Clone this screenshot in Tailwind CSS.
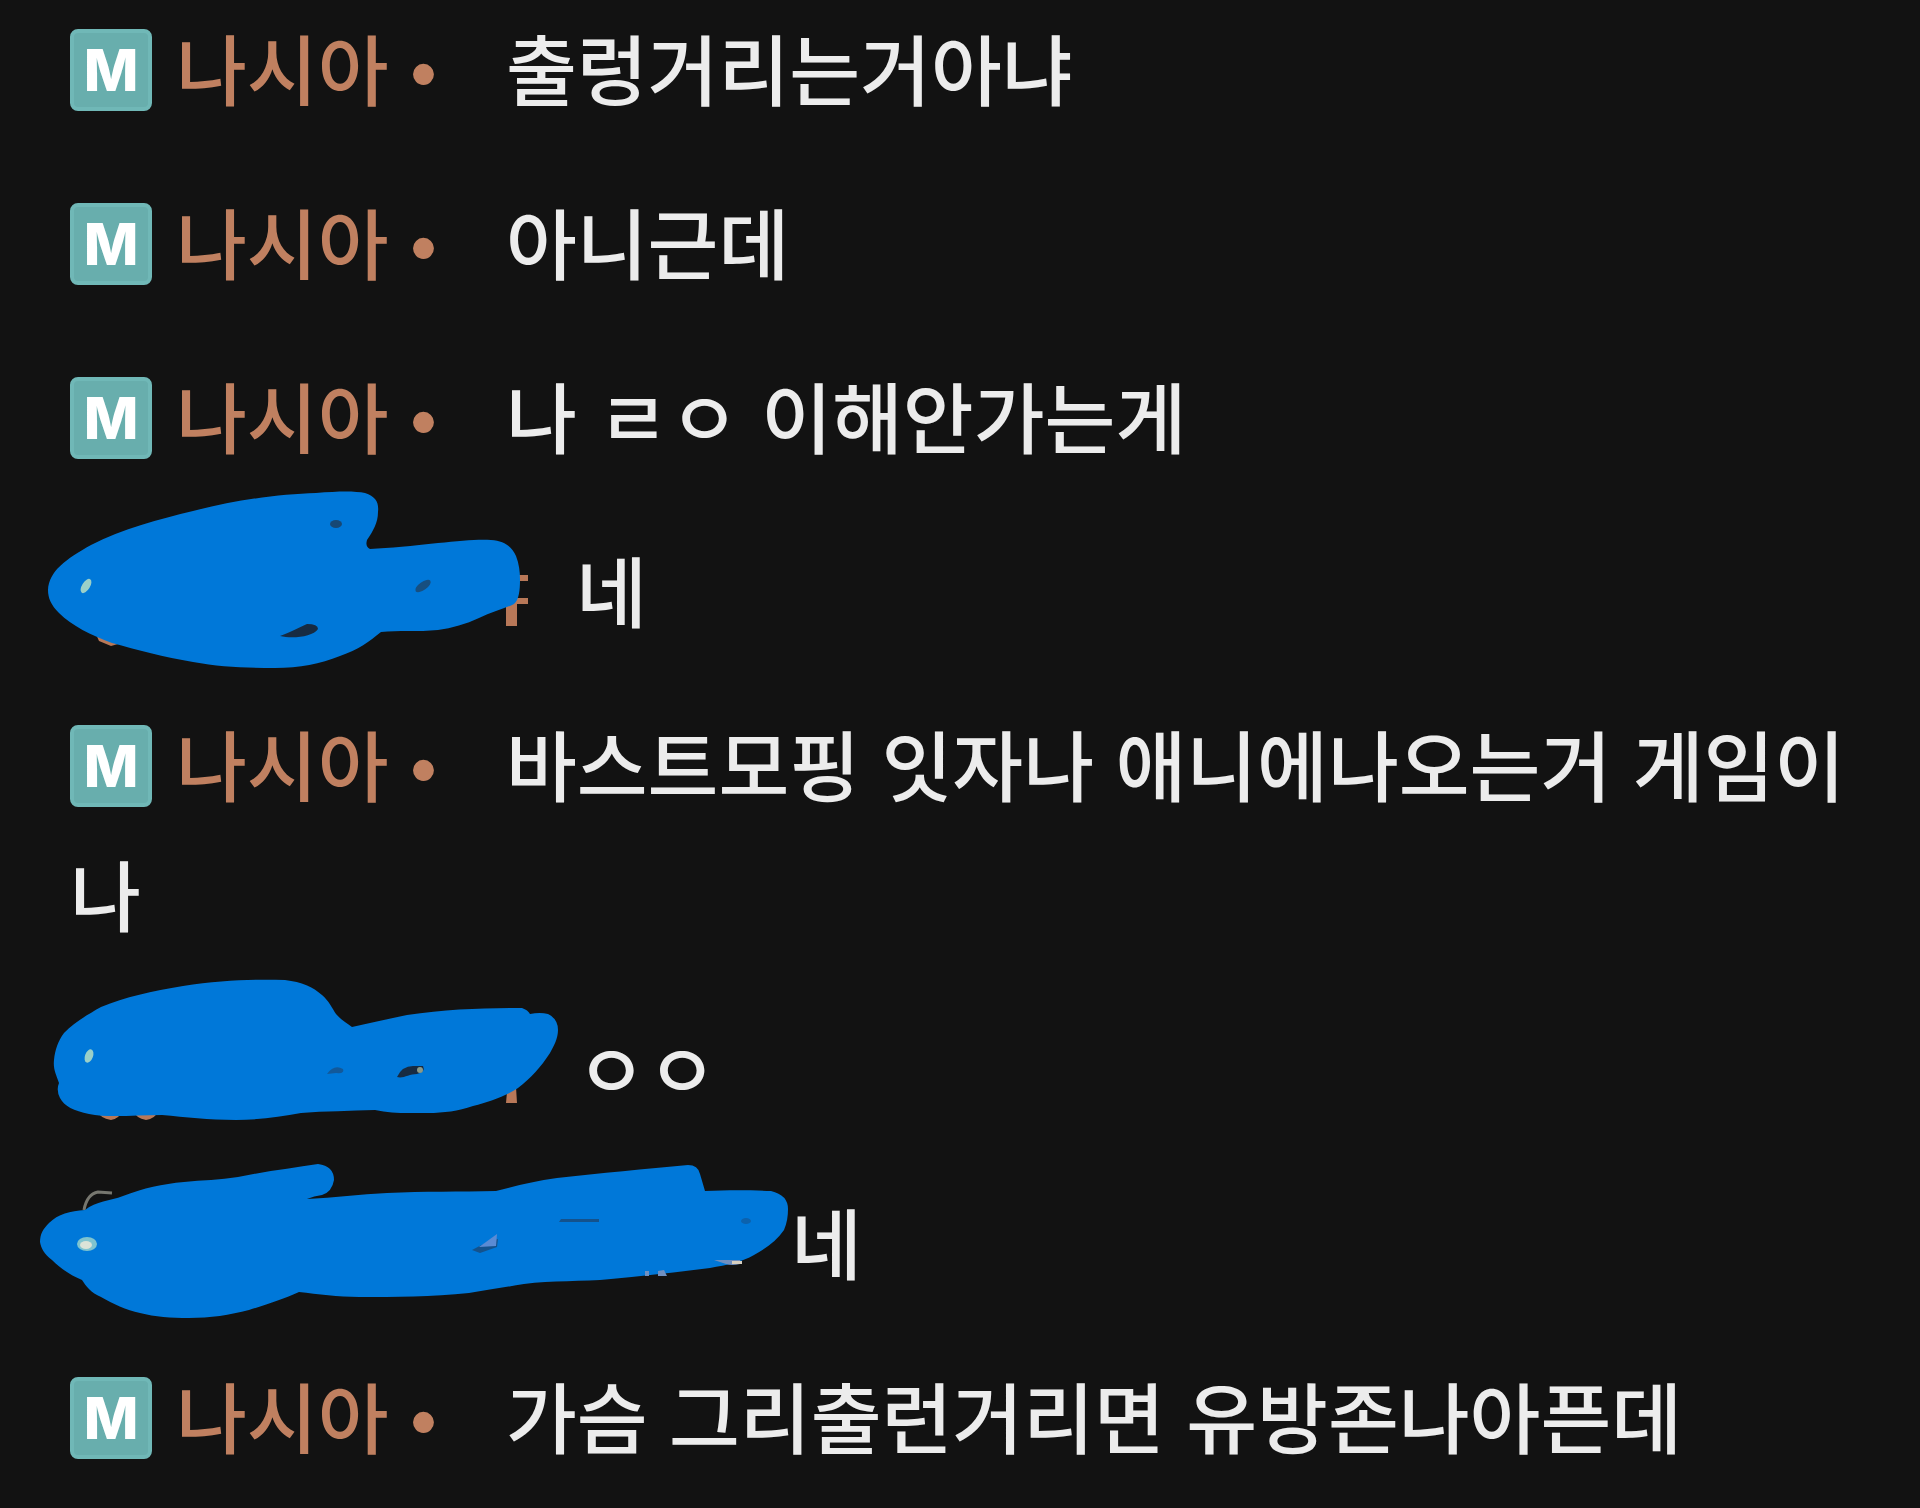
<!DOCTYPE html>
<html lang="ko">
    <head>
        <meta charset="UTF-8">
        <title>Chat</title>

        <meta name="viewport" content="width=device-width, initial-scale=1.0">
        <script src="https://cdn.jsdelivr.net/npm/@tailwindcss/browser@4"></script>
    </head>
    <body class="min-h-screen bg-[#121212]">
        <!-- Latin font first: it supplies the word space, Hangul comes from the CJK font -->
        <ul class="flex flex-col gap-11 overflow-hidden px-[70px] pt-2 font-['Liberation_Sans','Noto_Sans_CJK_KR',sans-serif] text-[77px] leading-[130px] font-medium text-[#ececec]">
            <li>
                <span class="mr-6 mb-5 inline-flex size-[82px] items-center justify-center rounded-lg border-4 border-[#70b8b7] bg-[#68aead] align-middle font-['Inter',sans-serif] text-[58px] leading-none font-extrabold text-white">M</span><span class="mr-[69px] text-[#c08060]">나시아 •</span>출렁거리는거아냐
            </li>
            <li>
                <span class="mr-6 mb-5 inline-flex size-[82px] items-center justify-center rounded-lg border-4 border-[#70b8b7] bg-[#68aead] align-middle font-['Inter',sans-serif] text-[58px] leading-none font-extrabold text-white">M</span><span class="mr-[69px] text-[#c08060]">나시아 •</span>아니근데
            </li>
            <li>
                <span class="mr-6 mb-5 inline-flex size-[82px] items-center justify-center rounded-lg border-4 border-[#70b8b7] bg-[#68aead] align-middle font-['Inter',sans-serif] text-[58px] leading-none font-extrabold text-white">M</span><span class="mr-[69px] text-[#c08060]">나시아 •</span>나 ㄹㅇ 이해안가는게
            </li>
            <!-- Name painted over -->
            <li class="relative pl-[506px]">
                <svg class="absolute -top-[45px] -left-[30px] h-[190px] w-[500px]" viewBox="40 485 500 190" aria-hidden="true">
                    <path fill="#b87858" d="M516 575h12v6h-12zM506 598h22v6h-11v22h-11zM95 632l14 1 9 11-7 2-12-5z" />
                    <path fill="#0078d9" d="M48 590C49 571 66 559 91 545C122 529 160 519 193 511C235 500 280 494 316 493C340 491 355 491 365 493C376 497 379 502 378 512C378 523 373 531 367 540Q365 547 370 549C390 548 412 546 438 543C460 541 478 539 491 540C505 541 512 547 516 556C519 564 520 571 520 580C520 590 519 600 514 604C504 609 492 612 479 618C466 624 452 628 438 630C418 632 398 630 381 632C370 641 358 650 340 656C320 664 300 668 275 668C245 668 220 667 193 662C164 657 137 650 112 643C91 635 72 626 59 613C51 605 48 598 48 590Z" />
                    <ellipse cx="86" cy="586" rx="4" ry="8" transform="rotate(32 86 586)" fill="#9bd0c8" />
                    <ellipse cx="336" cy="524" rx="6" ry="4" fill="#174874" />
                    <ellipse cx="423" cy="586" rx="9" ry="4" transform="rotate(-35 423 586)" fill="#174f80" />
                    <path fill="#172b42" d="M280 636C291 632 298 628 307 624Q318 624 318 629C313 637 292 639 280 636Z" />
                </svg>
                네
            </li>
            <li>
                <span class="mr-6 mb-5 inline-flex size-[82px] items-center justify-center rounded-lg border-4 border-[#70b8b7] bg-[#68aead] align-middle font-['Inter',sans-serif] text-[58px] leading-none font-extrabold text-white">M</span><span class="mr-[69px] text-[#c08060]">나시아 •</span>바스트모핑 잇자나 애니에나오는거 게임이나
            </li>
            <li class="relative pl-[506px]">
                <svg class="absolute -top-[33px] -left-5 h-[150px] w-[520px]" viewBox="50 975 520 150" aria-hidden="true">
                    <path fill="#b87858" d="M507 1092l9-5 1 16h-11zM97 1111h25q-3 8-11 9-11-2-14-9zM133 1111h25q-3 8-12 9-10-2-13-9z" />
                    <path fill="#0078d9" d="M54 1060C55 1050 58 1041 64 1033C74 1023 85 1016 101 1007C125 997 152 991 183 986C222 980 255 979 285 980C302 982 313 987 322 995C329 1001 332 1008 336 1014C341 1020 347 1023 352 1027C370 1023 388 1019 407 1015C447 1009 484 1008 522 1008Q528 1010 530 1014Q540 1012 548 1014Q558 1019 558 1030C558 1038 554 1046 550 1053C541 1067 531 1078 518 1088C504 1097 490 1101 473 1106C458 1111 444 1113 428 1113C408 1113 392 1114 375 1110C350 1111 325 1111 301 1113C280 1117 258 1120 236 1120C208 1120 186 1117 162 1115C135 1115 108 1118 89 1114C74 1111 64 1106 60 1098Q56 1090 59 1083C56 1074 53 1069 54 1060Z" />
                    <ellipse cx="89" cy="1056" rx="4" ry="7" transform="rotate(20 89 1056)" fill="#9bd0c8" />
                    <path fill="#12599a" d="M327 1074q7-10 16-5 2 5-7 4z" />
                    <path fill="#172b42" d="M397 1077Q402 1066 413 1066H423Q426 1072 417 1074C409 1074 403 1079 397 1077Z" />
                    <circle cx="420" cy="1070" r="3" fill="#8a9a88" />
                </svg>
                ㅇㅇ
            </li>
            <li class="relative pl-[721px]">
                <svg class="absolute -top-[22px] -left-10 h-[165px] w-[770px]" viewBox="30 1160 770 165" aria-hidden="true">
                    <path fill="none" stroke="#77776f" stroke-width="3" d="M84 1210q3-16 14-18l14 1" />
                    <path fill="#0078d9" d="M40 1242C40 1234 43 1229 49 1223C58 1214 70 1211 85 1210C96 1201 110 1201 123 1196C144 1188 162 1184 184 1182C202 1180 220 1180 238 1177C267 1171 293 1168 318 1164Q334 1166 334 1180Q332 1192 322 1195Q314 1196 307 1199C334 1198 360 1194 387 1193C424 1191 460 1192 496 1191C516 1186 534 1181 557 1178C600 1173 646 1169 688 1165Q698 1165 700 1174L705 1191C728 1190 748 1190 771 1191Q788 1195 788 1209C788 1216 787 1223 784 1230C777 1240 767 1248 754 1255C742 1262 727 1265 710 1268C678 1272 644 1276 611 1279C582 1282 552 1280 524 1284C506 1287 488 1290 469 1293C432 1297 395 1297 359 1297C338 1297 318 1294 299 1292C284 1299 268 1304 249 1310C230 1315 210 1318 189 1318C171 1318 155 1317 140 1313C126 1310 113 1304 101 1297C91 1293 86 1286 82 1280C70 1275 60 1268 52 1260C44 1254 41 1248 40 1242Z" />
                    <ellipse cx="87" cy="1244" rx="10" ry="7" fill="#7fc4cf" />
                    <ellipse cx="86" cy="1245" rx="6" ry="4" fill="#dbe3d8" />
                    <path fill="#14528c" d="M472 1250q14-8 26-11l-1 8-17 6zM561 1219h38v3h-40z" />
                    <path fill="#5a8bd4" d="M479 1247l18-13-1 12z" />
                    <ellipse cx="746" cy="1221" rx="5" ry="3" fill="#0c62ad" />
                    <path fill="#6f8fc0" d="M714 1260h26v4q-8 2-14 0zM645 1271h4v5h-4zM658 1271l6-1 3 6h-9z" />
                    <path fill="#d8cfc0" d="M732 1261h10v3h-10z" />
                </svg>
                네
            </li>
            <li>
                <span class="mr-6 mb-5 inline-flex size-[82px] items-center justify-center rounded-lg border-4 border-[#70b8b7] bg-[#68aead] align-middle font-['Inter',sans-serif] text-[58px] leading-none font-extrabold text-white">M</span><span class="mr-[69px] text-[#c08060]">나시아 •</span>가슴 그리출런거리면 유방존나아픈데
            </li>
        </ul>
    </body>
</html>
